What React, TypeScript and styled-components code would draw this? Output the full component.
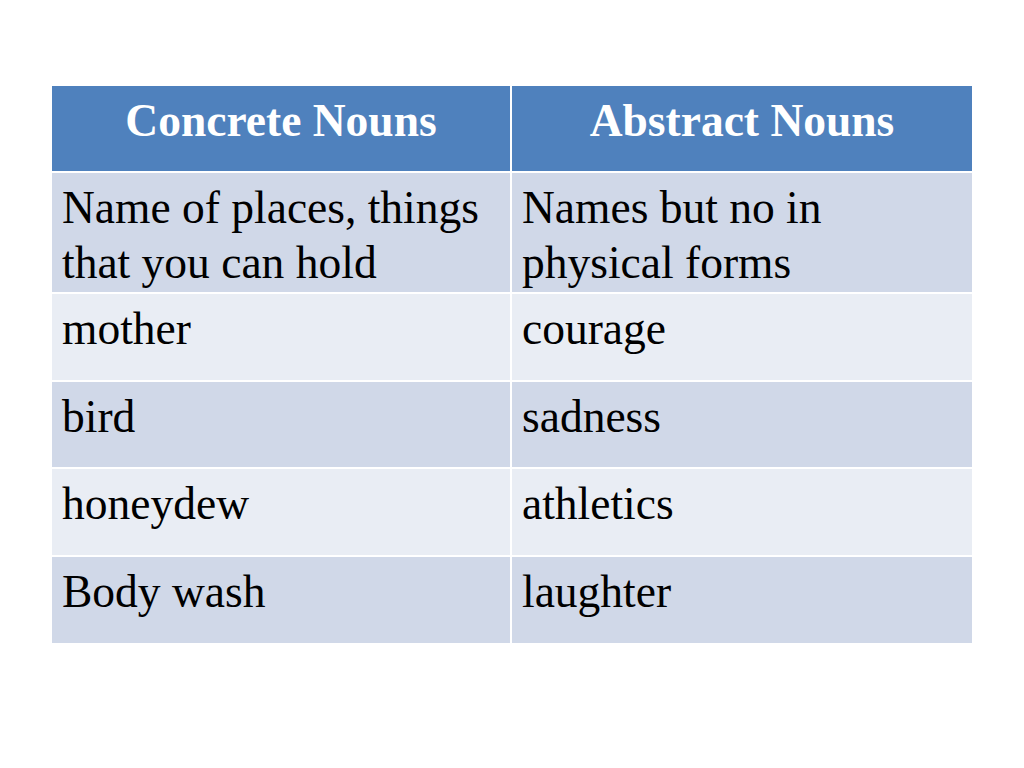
import React from 'react';
import styled, { createGlobalStyle } from 'styled-components';

const GlobalStyle = createGlobalStyle`
  html, body {
    margin: 0;
    padding: 0;
    background: #ffffff;
  }
  body {
    width: 1024px;
    height: 768px;
    overflow: hidden;
  }
`;

const Slide = styled.div`
  width: 1024px;
  height: 768px;
  box-sizing: border-box;
  padding: 86px 52px 0 52px;
  background: #ffffff;
  font-family: 'Liberation Serif', 'Times New Roman', serif;
`;

const Table = styled.div`
  display: grid;
  grid-template-columns: 458px 460px;
  grid-template-rows: 85px 119px 86px 85px 86px 86px;
  gap: 2px;
  width: 920px;
  background: #ffffff;
`;

const HeadCell = styled.div`
  box-sizing: border-box;
  padding: 8px 10px 0 10px;
  background: #4f81bd;
  color: #ffffff;
  font-weight: bold;
  font-size: 45.5px;
  line-height: 1.2;
  text-align: center;
`;

const Cell = styled.div<{ $shade: 'dark' | 'light' }>`
  box-sizing: border-box;
  padding: 8px 10px 0 10px;
  background: ${(props) => (props.$shade === 'dark' ? '#d0d8e8' : '#e9edf4')};
  color: #000000;
  font-size: 45.5px;
  line-height: 1.2;
`;

const rows: [string, string][] = [
  ['Name of places, things that you can hold', 'Names but no in physical forms'],
  ['mother', 'courage'],
  ['bird', 'sadness'],
  ['honeydew', 'athletics'],
  ['Body wash', 'laughter'],
];

export default function App() {
  return (
    <>
      <GlobalStyle />
      <Slide>
        <Table>
          <HeadCell>Concrete Nouns</HeadCell>
          <HeadCell>Abstract Nouns</HeadCell>
          {rows.map(([left, right], i) => {
            const shade = i % 2 === 0 ? 'dark' : 'light';
            return (
              <React.Fragment key={left}>
                <Cell $shade={shade}>{left}</Cell>
                <Cell $shade={shade}>{right}</Cell>
              </React.Fragment>
            );
          })}
        </Table>
      </Slide>
    </>
  );
}
